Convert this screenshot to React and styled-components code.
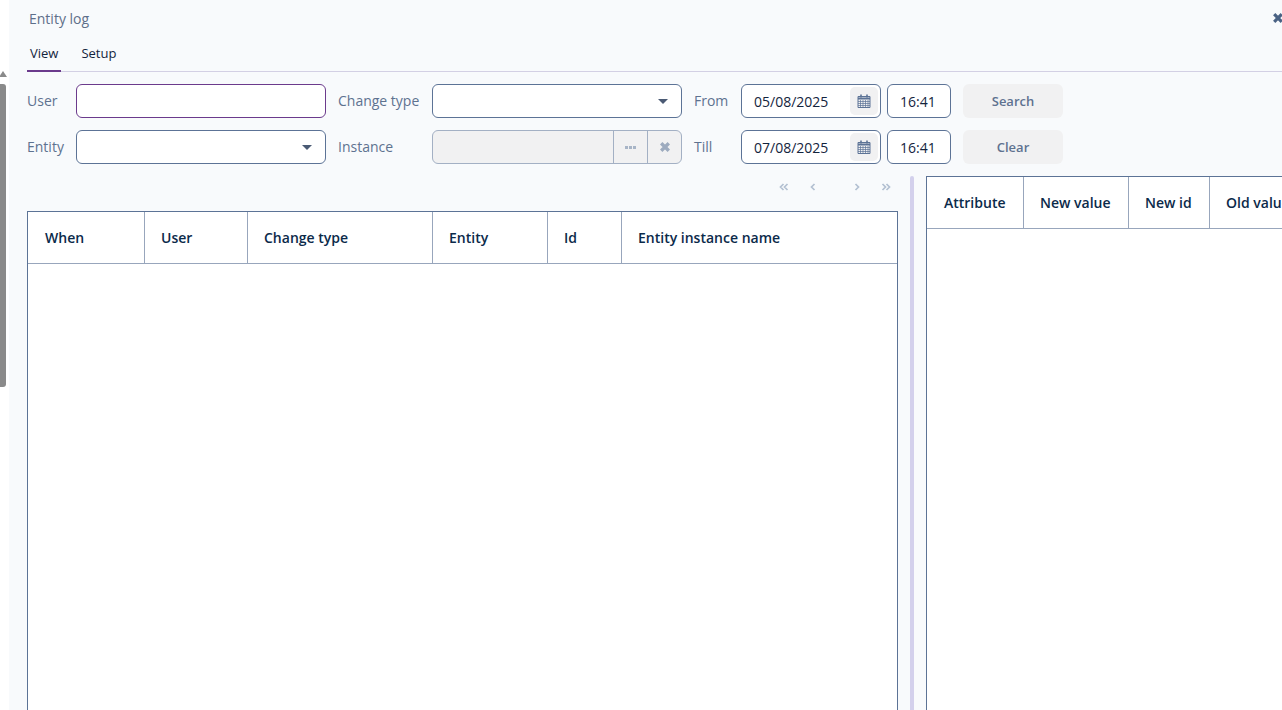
import React from "react"
import styled, { createGlobalStyle } from "styled-components"

const GlobalStyle = createGlobalStyle`
  html, body {
    margin: 0;
    height: 100%;
    overflow: hidden;
    background: #fff;
  }
  body {
    font-family: "Open Sans", "Noto Sans", sans-serif;
    font-size: 14px;
    color: #5c6f8c;
  }
`

const Page = styled.div`
  display: flex;
  width: 1282px;
  height: 710px;
  overflow: hidden;
`

const ScrollStrip = styled.div`
  width: 9px;
  flex: none;
  padding-top: 71px;
  box-sizing: border-box;
  background: #fff;
`

const ScrollArrow = styled.div`
  width: 0;
  height: 0;
  margin-bottom: 7px;
  border-left: 4px solid transparent;
  border-right: 4px solid transparent;
  border-bottom: 6px solid #8a8a8a;
  margin-left: -1px;
`

const ScrollThumb = styled.div`
  width: 6px;
  height: 303px;
  background: #8a8a8a;
  border-radius: 0 3px 3px 0;
`

const Panel = styled.div`
  flex: 1;
  min-width: 0;
  background: #f8fafc;
  display: flex;
  flex-direction: column;
`

const Header = styled.div`
  height: 36px;
  padding: 0 0 2px 20px;
  display: flex;
  align-items: center;
  justify-content: space-between;
`

const Title = styled.div`
  font-size: 14px;
  color: #5e6f8a;
`

const CloseIcon = styled.svg`
  width: 10px;
  height: 10px;
  margin-right: -1px;
  stroke: #4a6284;
  stroke-width: 3.2;
`

const Tabs = styled.div`
  height: 34px;
  box-sizing: border-box;
  display: flex;
  margin-left: 18px;
  gap: 17px;
  border-bottom: 1px solid #d3d0e4;
`

const Tab = styled.div`
  height: 34px;
  box-sizing: border-box;
  padding: 6px 3px 0;
  font-size: 13px;
  line-height: 19px;
  color: #13243d;
  border-bottom: 2px solid ${p => (p.$active ? "#6b3a8c" : "transparent")};
`

const Filters = styled.div`
  display: grid;
  grid-template-columns: 49px 250px 106px 250px 59px 140px 70px 112px;
  grid-auto-rows: 34px;
  row-gap: 12px;
  margin: 12px 0 0 18px;
  align-items: center;

  & > :nth-child(8n + 3),
  & > :nth-child(8n + 5),
  & > :nth-child(8n + 8) {
    margin-left: 12px;
  }
  & > :nth-child(8n + 7) {
    margin-left: 6px;
  }
`

const FieldLabel = styled.div`
  font-size: 14px;
  line-height: 20px;
  color: #5e7290;
  white-space: nowrap;
`

const Box = styled.div`
  height: 34px;
  box-sizing: border-box;
  display: flex;
  align-items: center;
  background: ${p => (p.$disabled ? "#f1f1f2" : "#fff")};
  border: 1px solid ${p => (p.$focus ? "#6b3a8c" : p.$disabled ? "#a3b0c4" : "#5c7396")};
  border-radius: 6px;
  font-size: 14px;
  color: #13243d;
`

const SelectBox = styled(Box)`
  justify-content: flex-end;
  padding-right: 13px;
`

const Caret = styled.span`
  width: 0;
  height: 0;
  border-left: 5px solid transparent;
  border-right: 5px solid transparent;
  border-top: 5px solid #4a5a74;
`

const InstanceValue = styled.div`
  flex: 1;
`

const InstanceButton = styled.div`
  width: 33px;
  height: 100%;
  flex: none;
  display: flex;
  align-items: center;
  justify-content: center;
  border-left: 1px solid #a3b0c4;
`

const Dots = styled.span`
  display: flex;
  gap: 1px;

  & > i {
    width: 3px;
    height: 3px;
    background: #a8b5c7;
  }
`

const ClearIcon = styled.svg`
  width: 10px;
  height: 10px;
  stroke: #9dabbf;
  stroke-width: 3.4;
`

const DateBox = styled(Box)`
  padding-left: 12px;
  justify-content: space-between;
`

const CalendarButton = styled.div`
  width: 28px;
  height: 28px;
  margin-right: 2px;
  display: flex;
  align-items: center;
  justify-content: center;
  background: #f1f1f2;
  border-radius: 5px;
`

const CalendarIcon = styled.svg`
  width: 14px;
  height: 14px;
  fill: none;
  stroke: #5c7396;
`

const TimeBox = styled(Box)`
  padding-left: 12px;
`

const ActionButton = styled.div`
  height: 34px;
  display: flex;
  align-items: center;
  justify-content: center;
  background: #f1f1f2;
  border-radius: 6px;
  font-size: 13px;
  font-weight: 600;
  color: #5e7290;
`

const Content = styled.div`
  flex: 1;
  min-height: 0;
  display: flex;
  margin-top: 12px;
`

const LeftPane = styled.div`
  width: 871px;
  margin-left: 18px;
  flex: none;
  display: flex;
  flex-direction: column;
`

const Pager = styled.div`
  height: 35px;
  flex: none;
  display: grid;
  grid-template-columns: 29px 44px 29px 12px;
  justify-content: end;
  padding: 5px 6px 0 0;
  box-sizing: border-box;
  align-content: start;
`

const PagerIcon = styled.svg`
  width: 12px;
  height: 12px;
  fill: none;
  stroke: #b3c0d2;
  stroke-width: 1.7;
`

const Splitter = styled.div`
  width: 4px;
  flex: none;
  margin-left: 12px;
  background: #d3d0ec;
  border-radius: 2px 2px 0 0;
`

const RightPane = styled.div`
  flex: none;
  width: 500px;
  margin-left: 12px;
`

const TableFrame = styled.div`
  flex: 1;
  height: 100%;
  box-sizing: border-box;
  background: #fff;
  border: 1px solid #5c7396;
  border-bottom: 0;
`

const HeadRow = styled.div`
  height: 52px;
  box-sizing: border-box;
  display: flex;
  border-bottom: 1px solid #98a6bc;
`

const HeadCell = styled.div`
  width: ${p => p.$w}px;
  flex: none;
  box-sizing: border-box;
  display: flex;
  align-items: center;
  padding-left: 16px;
  font-size: 14px;
  font-weight: 600;
  color: #0b2a4a;
  white-space: nowrap;
  border-right: ${p => (p.$last ? "0" : "1px solid #98a6bc")};

  &:first-child {
    padding-left: 17px;
  }
`

const logColumns = [
  ["When", 117],
  ["User", 103],
  ["Change type", 185],
  ["Entity", 115],
  ["Id", 74],
  ["Entity instance name", 275],
]

const detailColumns = [
  ["Attribute", 97],
  ["New value", 105],
  ["New id", 81],
  ["Old value", 120],
]

const Cross = () => <path d="M1.2 1.2l7.6 7.6M8.8 1.2L1.2 8.8" />

const Chevron = ({ double, left }) => (
  <PagerIcon viewBox="0 0 12 12">
    <g transform={left ? "" : "matrix(-1 0 0 1 12 0)"}>
      {double ? (
        <path d="M5.5 3 2.5 6l3 3M9.5 3 6.5 6l3 3" />
      ) : (
        <path d="M7.5 3 4.5 6l3 3" />
      )}
    </g>
  </PagerIcon>
)

const Calendar = () => (
  <CalendarIcon viewBox="0 0 14 14">
    <path d="M1 2.5h12v11H1z" />
    <path d="M1 4.5h12" strokeWidth="2" />
    <path d="M1 7.5h12M1 9.5h12M1 11.5h12M3.5 6v7M6 6v7M8.5 6v7M11 6v7" strokeWidth=".7" />
    <path d="M4 .5v3M10 .5v3" strokeWidth="1.6" />
  </CalendarIcon>
)

const Table = ({ columns }) => (
  <TableFrame>
    <HeadRow>
      {columns.map(([name, width], i) => (
        <HeadCell key={name} $w={width} $last={i === columns.length - 1}>
          {name}
        </HeadCell>
      ))}
    </HeadRow>
  </TableFrame>
)

const App = () => {
  return (
    <Page>
      <GlobalStyle />
      <ScrollStrip>
        <ScrollArrow />
        <ScrollThumb />
      </ScrollStrip>
      <Panel>
        <Header>
          <Title>Entity log</Title>
          <CloseIcon viewBox="0 0 10 10">
            <Cross />
          </CloseIcon>
        </Header>
        <Tabs>
          <Tab $active>View</Tab>
          <Tab>Setup</Tab>
        </Tabs>
        <Filters>
          <FieldLabel>User</FieldLabel>
          <Box $focus />
          <FieldLabel>Change type</FieldLabel>
          <SelectBox>
            <Caret />
          </SelectBox>
          <FieldLabel>From</FieldLabel>
          <DateBox>
            05/08/2025
            <CalendarButton>
              <Calendar />
            </CalendarButton>
          </DateBox>
          <TimeBox>16:41</TimeBox>
          <ActionButton>Search</ActionButton>

          <FieldLabel>Entity</FieldLabel>
          <SelectBox>
            <Caret />
          </SelectBox>
          <FieldLabel>Instance</FieldLabel>
          <Box $disabled>
            <InstanceValue />
            <InstanceButton>
              <Dots>
                <i />
                <i />
                <i />
              </Dots>
            </InstanceButton>
            <InstanceButton>
              <ClearIcon viewBox="0 0 10 10">
                <Cross />
              </ClearIcon>
            </InstanceButton>
          </Box>
          <FieldLabel>Till</FieldLabel>
          <DateBox>
            07/08/2025
            <CalendarButton>
              <Calendar />
            </CalendarButton>
          </DateBox>
          <TimeBox>16:41</TimeBox>
          <ActionButton>Clear</ActionButton>
        </Filters>
        <Content>
          <LeftPane>
            <Pager>
              <Chevron double left />
              <Chevron left />
              <Chevron />
              <Chevron double />
            </Pager>
            <Table columns={logColumns} />
          </LeftPane>
          <Splitter />
          <RightPane>
            <Table columns={detailColumns} />
          </RightPane>
        </Content>
      </Panel>
    </Page>
  )
}

export default App
